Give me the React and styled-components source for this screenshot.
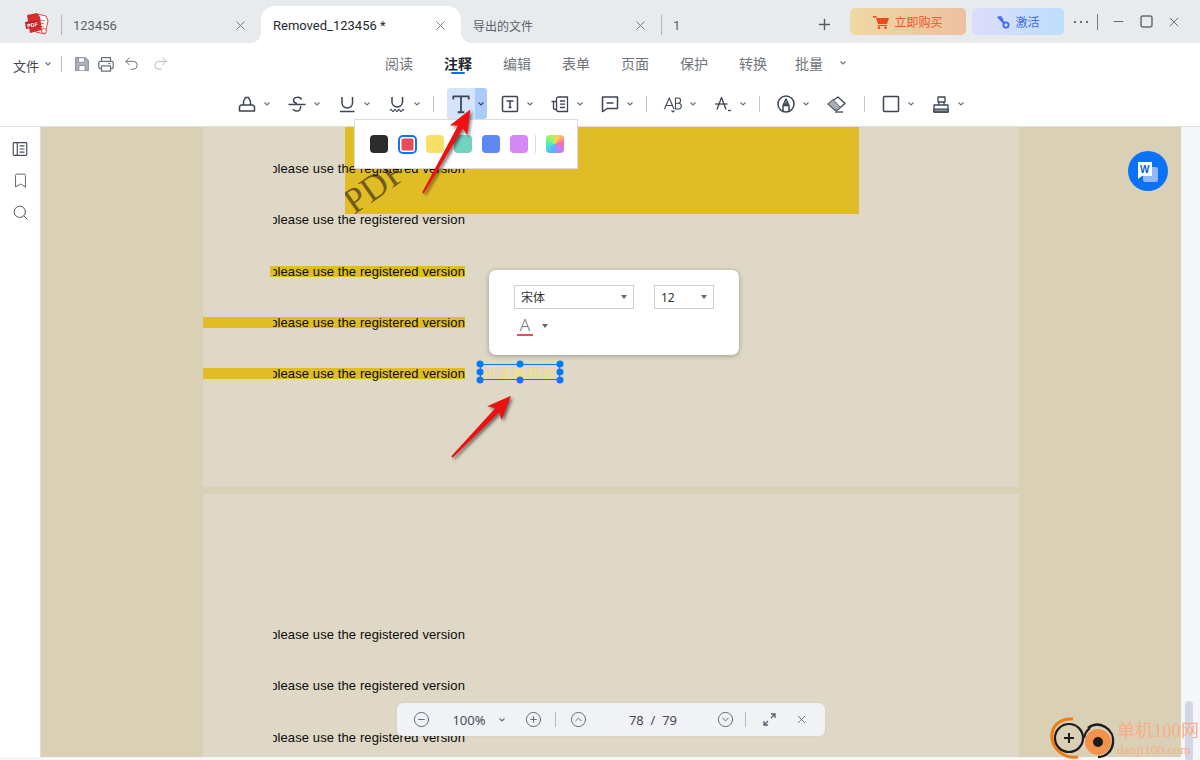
import React from "react";
import styled, { createGlobalStyle } from "styled-components";
import { X, Plus, Minus, Undo2, Redo2, Search, Bookmark, CircleMinus, CirclePlus, CircleChevronUp, CircleChevronDown } from "lucide-react";

const CJK = `"Noto Sans", "Noto Sans CJK SC", sans-serif`;

const GlobalStyle = createGlobalStyle`
  html, body { margin: 0; padding: 0; background: #f5f6f7; }
  body { font-family: ${CJK}; }
`;

const Window = styled.div`
  position: relative;
  width: 1200px;
  height: 760px;
  overflow: hidden;
  display: flex;
  flex-direction: column;
  background: #f5f6f7;
`;

/* title bar */
const TitleBar = styled.div`
  height: 43px;
  flex: none;
  display: flex;
  align-items: flex-end;
  background: #e8ebee;
`;

const LogoSlot = styled.div`
  width: 61px;
  height: 37px;
  flex: none;
  display: flex;
  align-items: center;
  padding-left: 24px;
  box-sizing: border-box;
`;

const Tab = styled.div`
  position: relative;
  width: ${(p) => p.$width || 200}px;
  height: 37px;
  flex: none;
  box-sizing: border-box;
  display: flex;
  align-items: center;
  justify-content: space-between;
  padding: 2px 13px 0 12px;
  font-family: Roboto, "Noto Sans CJK SC", sans-serif;
  font-size: ${(p) => (p.$small ? 12 : 13)}px;
  color: ${(p) => (p.$active ? "#26292e" : "#5d6167")};
  background: ${(p) => (p.$active ? "#fff" : "transparent")};
  border-radius: ${(p) => (p.$active ? "14px 14px 0 0" : "0")};

  ${(p) =>
    p.$divided &&
    `
    &::before {
      content: "";
      position: absolute;
      left: 0;
      top: 9px;
      height: 20px;
      width: 1px;
      background: #b4b8bd;
    }
  `}

  ${(p) =>
    p.$active &&
    `
    &::before, &::after {
      content: "";
      position: absolute;
      bottom: 0;
      width: 10px;
      height: 10px;
      background: radial-gradient(circle at var(--c) 0, #e8ebee 9.5px, #fff 10px);
    }
    &::before { left: -10px; --c: 0; }
    &::after { right: -10px; --c: 100%; }
  `}
`;

const TabClose = styled(X)`
  width: 15px;
  height: 15px;
  color: #74787e;
  stroke-width: 1.5;
`;

const AddTab = styled(Plus)`
  width: 17px;
  height: 17px;
  margin: 0 0 10px 1px;
  color: #565b63;
  stroke-width: 2;
  flex: none;
`;

const TitleRight = styled.div`
  display: flex;
  align-items: center;
  height: 43px;
  margin-left: 17px;
`;

const PromoButton = styled.div`
  height: 27px;
  width: ${(p) => p.$width}px;
  margin-right: ${(p) => p.$after}px;
  box-sizing: border-box;
  display: flex;
  align-items: center;
  justify-content: center;
  gap: 5px;
  border-radius: 5px;
  font-size: 12px;
  color: ${(p) => p.$color};
  background: linear-gradient(90deg, ${(p) => p.$from}, ${(p) => p.$to});
`;

const WindowControls = styled.div`
  display: flex;
  align-items: center;
  color: #676c74;
`;

const Dots = styled.span`
  width: 17px;
  height: 2px;
  margin-right: 8px;
  background: radial-gradient(circle, #676c74 1px, transparent 1.2px) 0 0 / 6px 2px repeat-x;
`;

const ThinRule = styled.span`
  width: 1px;
  height: 16px;
  margin-right: 6px;
  background: #777c83;
`;

const WindowButton = styled.span`
  width: 28px;
  height: 16px;
  display: flex;
  align-items: center;
  justify-content: center;
`;

/* ribbon */
const NavRow = styled.div`
  height: 41px;
  flex: none;
  display: flex;
  align-items: center;
  background: #fff;
`;

const FileGroup = styled.div`
  width: 372px;
  margin-left: 13px;
  flex: none;
  display: flex;
  align-items: center;
  color: #4a4f57;
`;

const FileLabel = styled.span`
  font-size: 13px;
  margin: 3px 4px 0 0;
  color: #42464d;
`;

const Divider = styled.span`
  width: 1px;
  height: 16px;
  background: #b9bcc1;
  margin: ${(p) => p.$margin};
`;

const QuickIcon = styled.span`
  display: flex;
  width: 18px;
  margin-right: ${(p) => p.$after}px;
  color: ${(p) => p.$color || "#6d727b"};
`;

const NavTabs = styled.div`
  display: flex;
  gap: 31px;
  align-items: center;
  margin-top: -2px;
`;

const NavTab = styled.span`
  position: relative;
  font-size: 14px;
  width: 28px;
  white-space: nowrap;
  margin-left: ${(p) => p.$nudge || 0}px;
  font-weight: ${(p) => (p.$active ? 700 : 400)};
  color: ${(p) => (p.$active ? "#22262c" : "#70747b")};

  ${(p) =>
    p.$active &&
    `
    &::after {
      content: "";
      position: absolute;
      left: 7px;
      bottom: -1px;
      width: 14px;
      height: 2px;
      border-radius: 1px;
      background: #0a6fe8;
    }
  `}
`;

const NavMore = styled.span`
  display: flex;
  margin-left: -16px;
`;

const ToolRow = styled.div`
  height: 43px;
  flex: none;
  box-sizing: border-box;
  display: flex;
  align-items: center;
  gap: 15px;
  padding: 0 0 3px 237px;
  background: #fff;
  border-bottom: 1px solid #dedfe1;
`;

const Tool = styled.div`
  display: flex;
  align-items: center;
  gap: 5px;
  color: #3c4456;
  margin-right: ${(p) => p.$after || 0}px;
`;

const ToolSep = styled.span`
  width: 1px;
  height: 16px;
  background: #c3c6cb;
  margin: 0 1px 0 -4px;
`;

const ActiveTool = styled.div`
  display: flex;
  height: 31px;
  margin: 0 -2px 0 -3px;
  color: #3c4456;
`;

const ActiveIcon = styled.span`
  width: 28px;
  display: flex;
  align-items: center;
  justify-content: center;
  background: #d4e4fb;
  border-radius: 3px 0 0 3px;
`;

const ActiveCaret = styled.span`
  width: 12px;
  display: flex;
  align-items: center;
  justify-content: center;
  background: #a9ccfb;
  border-radius: 0 3px 3px 0;
`;

/* body */
const Body = styled.div`
  flex: none;
  height: 630px;
  display: flex;
`;

const SideBar = styled.div`
  width: 41px;
  flex: none;
  display: flex;
  flex-direction: column;
  align-items: center;
  gap: 14px;
  padding-top: 13px;
  box-sizing: border-box;
  background: #fff;
  border-right: 1px solid #dcdcdc;
  color: #444b5d;
`;

const SideIcon = styled.span`
  display: flex;
  height: 18px;
`;

const Canvas = styled.div`
  position: relative;
  flex: 1;
  overflow: hidden;
  display: flex;
  flex-direction: column;
  align-items: center;
  gap: 7px;
  background: #d9d0b5;
`;

const Page = styled.div`
  position: relative;
  flex: none;
  width: 816px;
  height: ${(p) => p.$height}px;
  box-sizing: border-box;
  padding-top: ${(p) => p.$top}px;
  background: #dfd8c6;
`;

const StampBlock = styled.div`
  position: absolute;
  left: 142px;
  top: 0;
  width: 514px;
  height: 87px;
  overflow: hidden;
  background: #e0bd27;
`;

const StampText = styled.span`
  position: absolute;
  left: 9px;
  top: 58px;
  font-family: "Liberation Serif", serif;
  font-size: 36px;
  line-height: 36px;
  color: rgba(70, 55, 20, 0.72);
  transform: rotate(-35deg);
  transform-origin: 0 30px;
`;

const Row = styled.div`
  position: relative;
  height: 51.25px;
  display: flex;
  align-items: center;
`;

const Line = styled.div`
  width: ${(p) => (p.$band === "short" ? 195 : 262)}px;
  margin-left: ${(p) => (p.$band === "short" ? 67 : 0)}px;
  height: 11px;
  display: flex;
  align-items: center;
  justify-content: flex-end;
  background: ${(p) => (p.$band ? "#e0bd27" : "transparent")};
`;

const LineText = styled.div`
  width: 192px;
  overflow-x: clip;
  white-space: nowrap;
  font-family: "Liberation Sans", Arial, sans-serif;
  font-size: 13px;
  line-height: 11px;
  color: #0b0b08;
`;

const LineInner = styled.span`
  display: inline-block;
  margin-left: -2.8px;
  letter-spacing: 0.1px;
`;

/* things over the page */
const Palette = styled.div`
  position: absolute;
  left: 354px;
  top: 119px;
  width: 224px;
  height: 50px;
  box-sizing: border-box;
  padding-left: 15px;
  display: flex;
  align-items: center;
  gap: 10px;
  background: #fff;
  border: 1px solid #dcdcdc;
`;

const Swatch = styled.span`
  position: relative;
  width: 18px;
  height: 18px;
  border-radius: 4px;
  background: ${(p) => p.$color};
  box-sizing: border-box;

  ${(p) =>
    p.$selected &&
    `
    box-shadow: 0 0 0 2px #0a78f5, inset 0 0 0 1.5px #fff;
    border-radius: 3px;
    width: 15px;
    height: 15px;
    margin: 0 1.5px;
  `}
`;

const SwatchSep = styled.span`
  width: 1px;
  height: 18px;
  margin: 0 0 0 -3px;
  background: #dedede;
`;

const RainbowSwatch = styled.span`
  width: 18px;
  height: 18px;
  border-radius: 4px;
  background: conic-gradient(from 20deg at 50% 50%, #ffd84d, #ff6f9f, #c87bff, #55b0ff, #45e6d0, #9df26b, #ffd84d);
`;

const FontPopup = styled.div`
  position: absolute;
  left: 489px;
  top: 270px;
  width: 250px;
  height: 85px;
  box-sizing: border-box;
  padding: 15px 25px 0;
  background: #fff;
  border-radius: 7px;
  box-shadow: 0 1px 5px rgba(0, 0, 0, 0.3);
`;

const PopupRow = styled.div`
  display: flex;
  gap: 20px;
  align-items: center;
`;

const SelectBox = styled.div`
  width: ${(p) => p.$width}px;
  height: 24px;
  box-sizing: border-box;
  padding: 0 6px;
  display: flex;
  align-items: center;
  justify-content: space-between;
  border: 1px solid #cfcfcf;
  font-size: 12px;
  color: #333;
`;

const Caret = styled.span`
  width: 0;
  height: 0;
  border-left: 3.5px solid transparent;
  border-right: 3.5px solid transparent;
  border-top: 4.5px solid #666;
`;

const ColorPick = styled.div`
  display: flex;
  align-items: center;
  gap: 9px;
  margin: 7px 0 0 3px;
`;

const ColorLetter = styled.span`
  width: 16px;
  height: 20px;
  box-sizing: border-box;
  border-bottom: 2px solid #e84a64;
  font-size: 17px;
  font-weight: 300;
  line-height: 18px;
  text-align: center;
  color: #777;
`;

const SelectionBox = styled.div`
  position: absolute;
  left: 480px;
  top: 364px;
  width: 80px;
  height: 16px;
  box-sizing: border-box;
  border: 1px solid #0a78f5;
`;

const SelectionText = styled.div`
  height: 14px;
  overflow: hidden;
  white-space: nowrap;
  font-family: "Noto Sans CJK SC", serif;
  font-size: 14px;
  line-height: 14px;
  letter-spacing: 1px;
  color: #f5e27a;
  text-align: center;
`;

const Handle = styled.span`
  position: absolute;
  width: 7px;
  height: 7px;
  border-radius: 50%;
  background: #0a78f5;
  left: calc(${(p) => p.$x}% + ${(p) => p.$x / 50 - 1}px);
  top: calc(${(p) => p.$y}% + ${(p) => p.$y / 50 - 1}px);
  transform: translate(-50%, -50%);
`;

const WordButton = styled.div`
  position: absolute;
  left: 1128px;
  top: 151px;
  width: 40px;
  height: 40px;
  display: flex;
  align-items: center;
  justify-content: center;
  border-radius: 50%;
  background: #0a72f8;
`;

const ZoomBar = styled.div`
  position: absolute;
  left: 397px;
  top: 703px;
  width: 428px;
  height: 33px;
  display: grid;
  grid-template-columns: 48px 48px 18px 44px 1px 44px 106px 39px 1px 46px 18px;
  align-items: center;
  justify-items: center;
  box-sizing: border-box;
  background: #f0f2f5;
  border-radius: 6px;
  color: #5a6170;
  box-shadow: 0 0 2px rgba(0, 0, 0, 0.08);
`;

const ZoomText = styled.span`
  font-size: 13px;
  color: #454b58;
  white-space: pre;
`;

const ZoomSep = styled.span`
  width: 1px;
  height: 15px;
  background: #b5b8bd;
`;

const ScrollTrack = styled.div`
  flex: none;
  width: 19px;
  position: relative;
  background: #f5f6fa;
`;

const ScrollThumb = styled.span`
  position: absolute;
  left: 4px;
  top: 574px;
  width: 8px;
  height: 60px;
  border-radius: 4px;
  background: #d2d7e6;
`;

const Watermark = styled.div`
  position: absolute;
  left: 1050px;
  top: 716px;
  width: 150px;
  height: 44px;
  display: flex;
  gap: 0;
`;

const WatermarkText = styled.div`
  display: flex;
  flex-direction: column;
  font-family: "Liberation Serif", "Noto Sans CJK SC", serif;
  color: #f7ae85;
  margin-top: 4px;
`;

const WatermarkTitle = styled.span`
  font-size: 18px;
  line-height: 22px;
  letter-spacing: 0.2px;
  white-space: nowrap;
`;

const WatermarkUrl = styled.span`
  font-size: 13.5px;
  line-height: 15px;
  white-space: nowrap;
`;

const ArrowLayer = styled.svg`
  position: absolute;
  left: 0;
  top: 0;
  pointer-events: none;
  filter: drop-shadow(2px 2px 1.5px rgba(0, 0, 0, 0.5));
`;

const Chevron = ({ color = "#6b7280" }) => (
  <svg width="10" height="6" viewBox="0 0 10 6" fill="none">
    <path d="M2.5 1.5 L5 4 L7.5 1.5" stroke={color} strokeWidth="1.2" />
  </svg>
);

const Ico = ({ size = 20, children, fill = "none", sw = 1.5 }) => (
  <svg width={size} height={size} viewBox="0 0 20 20" fill={fill} stroke="currentColor" strokeWidth={sw} strokeLinejoin="round">
    {children}
  </svg>
);

const PdfLogo = () => (
  <svg width="25" height="25" viewBox="0 0 25 25">
    <path d="M13 2 L22 4 L24 9 L21 22 L12 20 Z" fill="#fff" stroke="#e0474a" strokeWidth="1" />
    <path d="M16 8 L21 9 M15.5 11 L20.5 12 M15 14 L20 15" stroke="#e0474a" strokeWidth="0.8" />
    <path d="M3 3 L13 1 L16 5 L18 18 L6 21 Z" fill="#d62c2c" />
    <path d="M1 10 L14 8 L15 15 L2 17 Z" fill="#c01f22" />
    <text x="3.2" y="15" fontSize="5.4" fontWeight="700" fill="#fff" fontFamily="Liberation Sans" transform="rotate(-8 8 13)">PDF</text>
    <circle cx="20" cy="19" r="2.4" fill="#fff" stroke="#e0474a" />
  </svg>
);

const SaveIcon = () => (
  <Ico size={18}>
    <path d="M3 3 H13.5 L17 6.5 V17 H3 Z" fill="#b2b6c0" stroke="#8f94a1" />
    <path d="M6 3 H13 V8 H6 Z" fill="#fff" stroke="#8f94a1" strokeWidth="1.2" />
    <path d="M6.5 17 V11.5 H13.5 V17" fill="#fff" stroke="#8f94a1" strokeWidth="1.2" />
  </Ico>
);

const PrintIcon = () => (
  <Ico size={18} sw={1.4}>
    <path d="M5 7 V3 H15 V7" />
    <rect x="2" y="7" width="16" height="8" rx="1.5" />
    <path d="M5 12 H15 V18 H5 Z" fill="#fff" />
    <path d="M12.5 9.5 H15" />
  </Ico>
);

const CartIcon = () => (
  <svg width="16" height="14" viewBox="0 0 16 14" fill="#f0471c">
    <path d="M0 1 H3 L4 3 H16 L14 9 H5 L3 2.5 H0 Z" />
    <path d="M4.6 10 H14 V11 H4.6 Z" />
    <circle cx="6" cy="12.7" r="1.3" />
    <circle cx="12.5" cy="12.7" r="1.3" />
  </svg>
);

const KeyIcon = () => (
  <svg width="14" height="14" viewBox="0 0 14 14" fill="none" stroke="#3e6bf0" strokeWidth="1.8">
    <circle cx="10" cy="10" r="2.6" />
    <path d="M8 8 L2 1.5" strokeWidth="2.2" />
    <path d="M3.5 3 L5.5 1.5 M5 5 L7 3.5" />
  </svg>
);

const icons = {
  highlight: (
    <Ico>
      <path d="M2.5 17 V12.5 L4 11 H16 L17.5 12.5 V17 Z" />
      <path d="M6.5 11 V7.5 L8.5 3.5 H11.5 L13.5 7.5 V11" />
    </Ico>
  ),
  strike: (
    <Ico>
      <path d="M14.5 5.5 C13.5 2.5 6.5 2.5 6.5 6.5 C6.5 8.2 8 9 10 9.8" />
      <path d="M1.5 10.5 H18.5" />
      <path d="M13.5 12 C14.5 15.5 12 17.5 9 17 C7.5 16.8 6.5 16 6 15" />
    </Ico>
  ),
  underline: (
    <Ico>
      <path d="M5 3 V9 C5 15.5 15.5 15.5 15.5 9 V3" />
      <path d="M3 17.5 H17.5" />
    </Ico>
  ),
  squiggle: (
    <Ico>
      <path d="M5 3 V8 C5 14.5 15.5 14.5 15.5 8 V3" />
      <path d="M3 16.5 q1 -2 2 0 t2 0 t2 0 t2 0 t2 0 t2 0 t2 0" strokeWidth="1.2" />
    </Ico>
  ),
  typewriter: (
    <Ico size={22} sw={1.6}>
      <path d="M3 6 V3 H17 V6 M10 3 V17.5 M7 17.5 H13" />
    </Ico>
  ),
  textbox: (
    <Ico>
      <rect x="2.5" y="2.5" width="15" height="15" rx="1" />
      <path d="M6.5 7 H13.5 M10 7 V13.5 M8.5 13.5 H11.5" />
    </Ico>
  ),
  callout: (
    <Ico sw={1.3}>
      <path d="M8 3 H17.5 V17.5 H8 C6.5 17.5 6.5 16 6.5 15 V5 C6.5 4 7 3 8 3 Z" />
      <path d="M10 7 H15 M10 10.2 H15 M10 13.5 H15" />
      <path d="M1.5 7.5 H6.5 M3.5 7.5 V14 C3.5 15.5 4.5 15.5 6 15.5" />
    </Ico>
  ),
  comment: (
    <Ico>
      <path d="M2.5 3 H17.5 V14.5 H7 L3 17.5 L2.5 17.5 Z" />
      <path d="M6.5 9 H13.5" />
    </Ico>
  ),
  caps: (
    <Ico sw={1.1}>
      <path d="M1.5 15 L6.2 4 L11 15 M3.2 11.5 H9.3" />
      <path d="M12.5 4 H15.5 C18.2 4 18.2 9.2 15.5 9.2 H12.5 M15.5 9.2 C19.2 9.2 19.2 15 15.5 15 H12.5 V4" />
      <path d="M8.5 16.5 L10 18 L11.5 16.5" />
    </Ico>
  ),
  strikeA: (
    <Ico sw={1.3}>
      <path d="M4 15.5 L8.5 3.5 L13 15.5" />
      <path d="M2 10 H14.5" />
      <path d="M15 16.5 H18" />
    </Ico>
  ),
  marker: (
    <Ico>
      <circle cx="10" cy="10" r="8" />
      <path d="M7 17 V11.5 L10 5 L13 11.5 V17" />
      <path d="M7.5 12 L10 8 L12.5 12 Z" fill="currentColor" strokeWidth="0.6" />
    </Ico>
  ),
  eraser: (
    <Ico sw={1.3}>
      <path d="M12 3 L19 9.5 L11.5 16 L9 16 L2 10 Z" />
      <path d="M2 10 L7 5.5 L14.5 13.4 L11.5 16 L9 16 Z" fill="#a9adb7" strokeWidth="0.8" />
      <path d="M9 18 H17" />
    </Ico>
  ),
  shape: (
    <Ico>
      <rect x="2.5" y="2.5" width="15" height="15" rx="1" />
    </Ico>
  ),
  stamp: (
    <Ico sw={1.3}>
      <path d="M7 3 H14 V8 H7 Z" />
      <path d="M8 8 V11 M13 8 V11" />
      <path d="M3 11 H17 V18 H3 Z" />
      <path d="M3 15.2 H17 V18 H3 Z" fill="#8d92a0" />
    </Ico>
  ),
};

const Arrow = ({ x, y, length, angle }) => (
  <g transform={`translate(${x} ${y}) rotate(${angle})`}>
    <path
      d={`M0 -1 L${length - 20} -2.8 L${length - 24} -10 L${length} 0 L${length - 24} 10 L${length - 20} 2.8 L0 1 Z`}
      fill="#ee1111"
    />
  </g>
);

const Expand = () => (
  <svg width="15" height="15" viewBox="0 0 15 15" fill="none" stroke="currentColor" strokeWidth="1.3">
    <path d="M2 13 L6 9 M9 6 L13 2 M9 2 H13 V6 M2 9 V13 H6" />
  </svg>
);

const LogoMark = () => (
  <svg width="67" height="44" viewBox="0 0 67 44" fill="none">
    <path d="M23 3 C8 2 1 12 2 22 C3 33 14 43 28 41" stroke="#f47a14" strokeWidth="3" />
    <circle cx="19" cy="22" r="14" stroke="#1d1d1d" strokeWidth="2.2" fill="#d9d0b5" />
    <path d="M14 22 H24 M19 17 V27" stroke="#1d1d1d" strokeWidth="2" />
    <circle cx="48" cy="26" r="13" fill="#f4914a" />
    <path d="M38 12 C50 3 65 14 63 27 C62 35 56 41 48 41" stroke="#1d1d1d" strokeWidth="2.4" />
    <path d="M34 22 C35 17 37 14 40 12" stroke="#1d1d1d" strokeWidth="2.2" />
    <circle cx="48" cy="26" r="5" fill="#1d1d1d" />
  </svg>
);

const pageOneRows = [
  { band: null },
  { band: null },
  { band: "short" },
  { band: "full" },
  { band: "full" },
];

const tabs = ["阅读", "注释", "编辑", "表单", "页面", "保护", "转换", "批量"];
const swatches = ["#2b2b2b", "#e9485f", "#f8df66", "#72d4c0", "#5f88f4", "#d786f5"];
const handles = [
  [0, 0], [50, 0], [100, 0],
  [0, 50], [100, 50],
  [0, 100], [50, 100], [100, 100],
];

const TextLine = ({ band }) => (
  <Row>
    <Line $band={band}>
      <LineText>
        <LineInner>please use the registered version</LineInner>
      </LineText>
    </Line>
  </Row>
);

export default function App() {
  return (
    <Window>
      <GlobalStyle />
      <TitleBar>
        <LogoSlot>
          <PdfLogo />
        </LogoSlot>
        <Tab $divided>
          123456
          <TabClose />
        </Tab>
        <Tab $active>
          Removed_123456 *
          <TabClose />
        </Tab>
        <Tab $small>
          导出的文件
          <TabClose />
        </Tab>
        <Tab $divided $width={154}>1</Tab>
        <AddTab />
        <TitleRight>
          <PromoButton $width={116} $after={6} $color="#f0522a" $from="#efd9a4" $to="#edc0a0">
            <CartIcon />
            立即购买
          </PromoButton>
          <PromoButton $width={92} $after={8} $color="#3e6bf0" $from="#dcdcfb" $to="#bcdffb">
            <KeyIcon />
            激活
          </PromoButton>
          <WindowControls>
            <Dots />
            <ThinRule />
            <WindowButton>
              <Minus size={15} strokeWidth={1.6} />
            </WindowButton>
            <WindowButton>
              <svg width="13" height="13" viewBox="0 0 13 13" fill="none" stroke="currentColor" strokeWidth="1.5">
                <rect x="1" y="1" width="11" height="11" rx="2" />
              </svg>
            </WindowButton>
            <WindowButton>
              <X size={16} strokeWidth={1.4} />
            </WindowButton>
          </WindowControls>
        </TitleRight>
      </TitleBar>

      <NavRow>
        <FileGroup>
          <FileLabel>文件</FileLabel>
          <Chevron />
          <Divider $margin="0 11px 0 8px" />
          <QuickIcon $after={6}><SaveIcon /></QuickIcon>
          <QuickIcon $after={8}><PrintIcon /></QuickIcon>
          <QuickIcon $after={11} $color="#6d727b"><Undo2 size={17} strokeWidth={1.4} /></QuickIcon>
          <QuickIcon $color="#b5b8bd"><Redo2 size={17} strokeWidth={1.4} /></QuickIcon>
        </FileGroup>
        <NavTabs>
          {tabs.map((t) => (
            <NavTab key={t} $active={t === "注释"} $nudge={t === "批量" ? -3 : 0}>{t}</NavTab>
          ))}
          <NavMore><Chevron /></NavMore>
        </NavTabs>
      </NavRow>

      <ToolRow>
        <Tool>{icons.highlight}<Chevron /></Tool>
        <Tool>{icons.strike}<Chevron /></Tool>
        <Tool>{icons.underline}<Chevron /></Tool>
        <Tool>{icons.squiggle}<Chevron /></Tool>
        <ToolSep />
        <ActiveTool>
          <ActiveIcon>{icons.typewriter}</ActiveIcon>
          <ActiveCaret><Chevron color="#3c4456" /></ActiveCaret>
        </ActiveTool>
        <Tool>{icons.textbox}<Chevron /></Tool>
        <Tool>{icons.callout}<Chevron /></Tool>
        <Tool>{icons.comment}<Chevron /></Tool>
        <ToolSep />
        <Tool>{icons.caps}<Chevron /></Tool>
        <Tool>{icons.strikeA}<Chevron /></Tool>
        <ToolSep />
        <Tool>{icons.marker}<Chevron /></Tool>
        <Tool $after={7}>{icons.eraser}</Tool>
        <ToolSep />
        <Tool>{icons.shape}<Chevron /></Tool>
        <Tool>{icons.stamp}<Chevron /></Tool>
      </ToolRow>

      <Body>
        <SideBar>
          <SideIcon>
            <Ico size={18} sw={1.3}>
              <rect x="2.5" y="3" width="15" height="14" rx="1" />
              <path d="M7 3 V17 M9.5 6.5 H15 M9.5 10 H15 M9.5 13.5 H15" />
            </Ico>
          </SideIcon>
          <SideIcon><Bookmark size={17} strokeWidth={1.3} color="#555b6b" /></SideIcon>
          <SideIcon><Search size={17} strokeWidth={1.3} /></SideIcon>
        </SideBar>
        <Canvas>
          <Page $height={360} $top={15.9}>
            <StampBlock>
              <StampText>PDF</StampText>
            </StampBlock>
            {pageOneRows.map((r, i) => (
              <TextLine key={i} band={r.band} />
            ))}
          </Page>
          <Page $height={300} $top={115.1}>
            <TextLine />
            <TextLine />
            <TextLine />
          </Page>
        </Canvas>
        <ScrollTrack>
          <ScrollThumb />
        </ScrollTrack>
      </Body>

      <Palette>
        {swatches.map((c, i) => (
          <Swatch key={c} $color={c} $selected={i === 1} />
        ))}
        <SwatchSep />
        <RainbowSwatch />
      </Palette>

      <FontPopup>
        <PopupRow>
          <SelectBox $width={120}>宋体<Caret /></SelectBox>
          <SelectBox $width={60}>12<Caret /></SelectBox>
        </PopupRow>
        <ColorPick>
          <ColorLetter>A</ColorLetter>
          <Caret />
        </ColorPick>
      </FontPopup>

      <SelectionBox>
        <SelectionText>可注释内容</SelectionText>
        {handles.map(([x, y]) => (
          <Handle key={`${x}-${y}`} $x={x} $y={y} />
        ))}
      </SelectionBox>

      <WordButton>
        <svg width="26" height="26" viewBox="0 0 26 26">
          <rect x="8" y="9" width="15" height="15" rx="2" fill="#8fb9fb" />
          <path d="M3 4 H17 V18 H7 L3 21 Z" fill="#fff" />
          <text x="5" y="15" fontSize="10" fontWeight="700" fill="#0a5fcf" fontFamily="Liberation Sans">W</text>
        </svg>
      </WordButton>

      <ZoomBar>
        <CircleMinus size={17} strokeWidth={1.3} />
        <ZoomText>100%</ZoomText>
        <Chevron />
        <CirclePlus size={17} strokeWidth={1.3} />
        <ZoomSep />
        <CircleChevronUp size={17} strokeWidth={1.3} />
        <ZoomText>78  /  79</ZoomText>
        <CircleChevronDown size={17} strokeWidth={1.3} />
        <ZoomSep />
        <Expand />
        <X size={13} strokeWidth={1.5} />
      </ZoomBar>

      <Watermark>
        <LogoMark />
        <WatermarkText>
          <WatermarkTitle>单机100网</WatermarkTitle>
          <WatermarkUrl>danji100.com</WatermarkUrl>
        </WatermarkText>
      </Watermark>

      <ArrowLayer width="1200" height="760">
        <Arrow x={423} y={193} length={96} angle={-60.5} />
        <Arrow x={452} y={457} length={85} angle={-46} />
      </ArrowLayer>
    </Window>
  );
}
